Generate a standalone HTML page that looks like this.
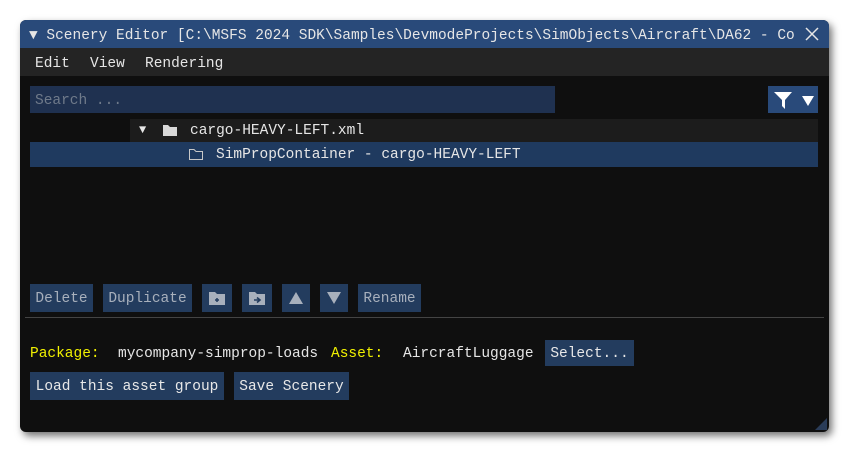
<!DOCTYPE html><html><head><style>
body{margin:0;width:848px;height:453px;background:#fff;position:relative;overflow:hidden;font-family:"Liberation Mono",monospace;font-size:14.5px;color:#e6e6e6}
.a{position:absolute}
.win{left:20px;top:20px;width:809px;height:412px;background:#0f0f0f;border-radius:6px;box-shadow:3px 4px 8px rgba(0,0,0,.55);overflow:hidden}
.btn{position:absolute;background:#233c5e;color:#e8e8e8;height:28px;line-height:30px;text-align:center}
.dim{color:#a8b0bc}
</style></head><body>
<div class="a win">
 <div class="a" style="left:0;top:0;width:809px;height:28px;background:#294a7a"></div>
 <div class="a" style="left:9px;top:8px;line-height:16px;white-space:nowrap;width:776px;overflow:hidden">▼ Scenery Editor [C:\MSFS 2024 SDK\Samples\DevmodeProjects\SimObjects\Aircraft\DA62 - Co</div>
 <svg class="a" style="left:784px;top:6px" width="16" height="16"><path d="M2 2L14 14M14 2L2 14" stroke="#e6e6e6" stroke-width="1.5"/></svg>
 <div class="a" style="left:0;top:28px;width:809px;height:28px;background:#242424"></div>
 <div class="a" style="left:15px;top:36px">Edit</div>
 <div class="a" style="left:70px;top:36px">View</div>
 <div class="a" style="left:125px;top:36px">Rendering</div>
 <div class="a" style="left:10px;top:66px;width:525px;height:27px;background:#1f3150"></div>
 <div class="a dim" style="left:15px;top:73px;color:#6f7a8a">Search ...</div>
 <div class="a" style="left:748px;top:66px;width:50px;height:27px;background:#294a7a"></div>
 <svg class="a" style="left:752px;top:69px" width="44" height="22"><path d="M2 3H20L13 11V20L10 17V11Z" fill="#fff"/><path d="M30 7H42L36 17Z" fill="#fff"/></svg>
 <div class="a" style="left:110px;top:99px;width:688px;height:23px;background:#1c1c1c"></div>
 <div class="a" style="left:119px;top:103px;font-size:12px">▼</div>
 <svg class="a" style="left:142px;top:103px" width="16" height="14"><path d="M1 2H6L8 4H15V13H1Z" fill="#d8d8d8"/></svg>
 <div class="a" style="left:170px;top:103px">cargo-HEAVY-LEFT.xml</div>
 <div class="a" style="left:10px;top:122px;width:788px;height:25px;background:#1f3a5f"></div>
 <svg class="a" style="left:168px;top:127px" width="16" height="14"><path d="M1.5 2.5H6L8 4.5H14.5V12.5H1.5Z" fill="none" stroke="#c8c8c8"/></svg>
 <div class="a" style="left:196px;top:127px">SimPropContainer - cargo-HEAVY-LEFT</div>
 <div class="btn dim" style="left:10px;top:264px;width:63px">Delete</div>
 <div class="btn dim" style="left:83px;top:264px;width:89px">Duplicate</div>
 <div class="btn" style="left:182px;top:264px;width:30px"><svg width="20" height="16" style="margin-top:6px"><path d="M2 2H8L10 4H18V15H2Z" fill="#a8b0bc"/><path d="M8 10H12M10 8V12" stroke="#233c5e" stroke-width="1.5"/></svg></div>
 <div class="btn" style="left:222px;top:264px;width:30px"><svg width="20" height="16" style="margin-top:6px"><path d="M2 2H8L10 4H18V15H2Z" fill="#a8b0bc"/><path d="M7 10H12M10 7.5L13 10L10 12.5" stroke="#233c5e" stroke-width="1.6" fill="none"/></svg></div>
 <div class="btn" style="left:262px;top:264px;width:28px"><svg width="16" height="14" style="margin-top:7px"><path d="M1 13H15L8 1Z" fill="#a8b0bc"/></svg></div>
 <div class="btn" style="left:300px;top:264px;width:28px"><svg width="16" height="14" style="margin-top:7px"><path d="M1 1H15L8 13Z" fill="#a8b0bc"/></svg></div>
 <div class="btn dim" style="left:338px;top:264px;width:63px">Rename</div>
 <div class="a" style="left:5px;top:297px;width:799px;height:1px;background:#444"></div>
 <div class="a" style="left:10px;top:326px;color:#f0f000">Package:</div>
 <div class="a" style="left:98px;top:326px">mycompany-simprop-loads</div>
 <div class="a" style="left:311px;top:326px;color:#f0f000">Asset:</div>
 <div class="a" style="left:383px;top:326px">AircraftLuggage</div>
 <div class="btn" style="left:525px;top:320px;width:89px;height:26px;line-height:28px">Select...</div>
 <div class="btn" style="left:10px;top:352px;width:194px">Load this asset group</div>
 <div class="btn" style="left:214px;top:352px;width:115px">Save Scenery</div>
 <svg class="a" style="left:795px;top:398px" width="12" height="12"><path d="M12 0V12H0Z" fill="#2a3c58"/></svg>
</div>
</body></html>
